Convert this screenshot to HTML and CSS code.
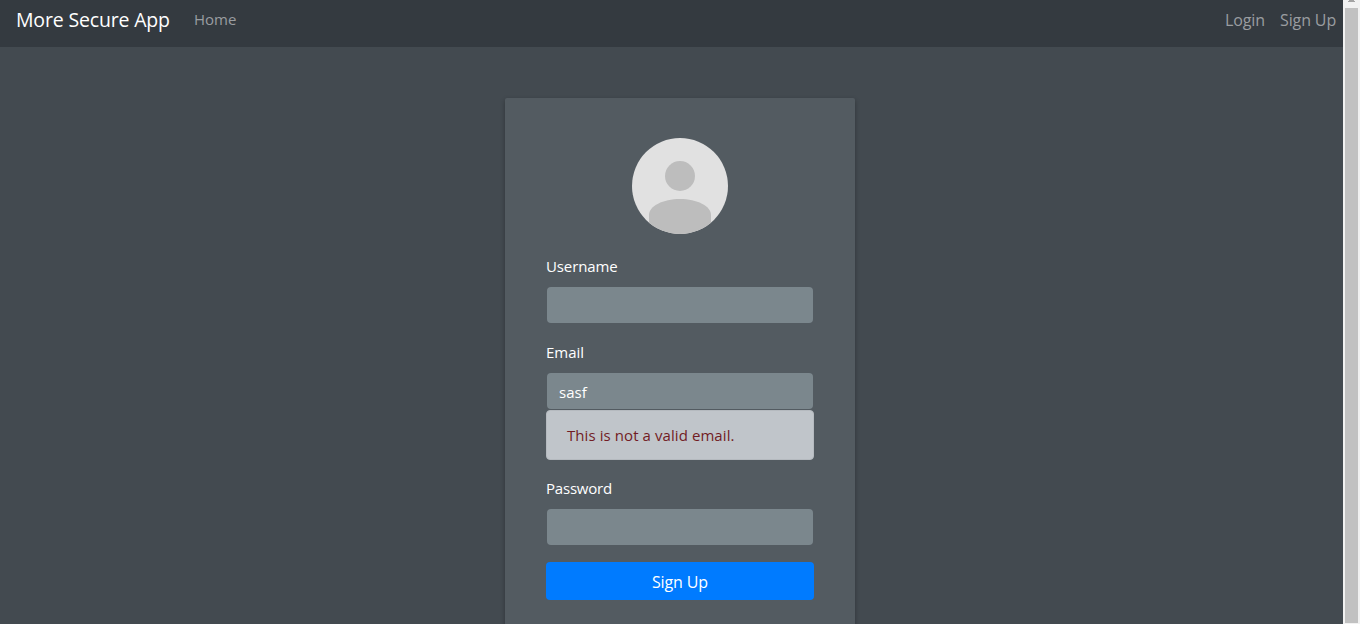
FILE: index.html
```html
<!DOCTYPE html>
<html lang="en">
<head>
<meta charset="utf-8">
<title>More Secure App</title>
<link rel="stylesheet" href="styles.css">
</head>
<body>
<div class="page">
  <nav class="navbar">
    <a class="brand">More Secure App</a>
    <a class="nav-link home">Home</a>
    <a class="nav-link login">Login</a>
    <a class="nav-link signup">Sign Up</a>
  </nav>
  <main class="card">
    <svg class="avatar" viewBox="0 0 96 96">
      <defs><clipPath id="round"><circle cx="48" cy="48" r="48"/></clipPath></defs>
      <g clip-path="url(#round)">
        <rect width="96" height="96" fill="#e1e1e1"/>
        <circle cx="48" cy="38" r="15" fill="#bdbdbd"/>
        <path d="M17 96V77C17 68 31 61 48 61S79 68 79 77V96Z" fill="#bdbdbd"/>
      </g>
    </svg>
    <form class="form">
      <div class="group">
        <label class="label username" for="username">Username</label>
        <input class="control" id="username" type="text">
      </div>
      <div class="group">
        <label class="label" for="email">Email</label>
        <input class="control" id="email" type="text" value="sasf">
        <div class="alert">This is not a valid email.</div>
      </div>
      <div class="group">
        <label class="label password" for="password">Password</label>
        <input class="control" id="password" type="password">
      </div>
      <button class="submit" type="button">Sign Up</button>
    </form>
  </main>
</div>
<div class="scrollbar">
  <svg class="arrow" viewBox="0 0 17 8"><path d="M6 0H11V1H12V2H5V1H6Z" fill="#a3a3a3"/></svg>
  <div class="thumb"></div>
</div>
</body>
</html>
```
FILE: styles.css
```css
* { box-sizing: border-box; }
body {
  margin: 0;
  height: 624px;
  display: flex;
  overflow: hidden;
  background: #434a50;
  font: 15px/24px "Segoe UI", "Open Sans", "Noto Sans", sans-serif;
  color: #fff;
}
.page { flex: 1; height: 624px; overflow: hidden; }
.navbar {
  height: 47px;
  padding: 7px 6px 0 16px;
  display: flex;
  background: #343a40;
  white-space: nowrap;
}
.brand {
  width: 154px;
  margin-right: 24px;
  padding-top: 1px;
  font-size: 19.5px;
  letter-spacing: -0.17px;
}
.nav-link { color: #9a9da0; }
.home { width: 43px; }
.login,
.signup { padding-top: 1px; font-size: 16px; letter-spacing: -0.12px; }
.login { width: 40px; margin: 0 15px 0 auto; }
.signup { width: 57px; }
.card {
  width: 350px;
  height: 600px;
  margin: 51px 0 0 505px;
  padding: 40px 41px;
  border-radius: 2px;
  background: #535b61;
  box-shadow: 0 2px 5px rgba(0, 0, 0, 0.3);
}
.avatar { display: block; width: 96px; height: 96px; margin: 0 auto 20px; }
.group { display: flex; flex-direction: column; margin-bottom: 16px; }
.label { height: 24px; margin-bottom: 9px; }
.username { letter-spacing: -0.12px; }
.password { letter-spacing: -0.2px; }
.control {
  height: 36px;
  margin: 0 1px 1px;
  padding: 2px 12px 0;
  border: 0;
  border-radius: 4px;
  background: #7b878d;
  color: #fff;
  font: inherit;
}
.alert {
  height: 50px;
  padding: 12px 20px;
  border: 1px solid #b5babf;
  border-radius: 4px;
  background: #c0c5ca;
  color: #721c24;
  letter-spacing: 0.08px;
}
.submit {
  display: block;
  width: 268px;
  height: 38px;
  padding: 2px 0 0;
  border: 0;
  border-radius: 4px;
  background: #007bff;
  color: #fff;
  font: inherit;
  font-size: 16px;
  letter-spacing: -0.12px;
}
.scrollbar { width: 17px; height: 624px; background: #f1f1f1; }
.arrow { display: block; width: 17px; height: 8px; }
.thumb { width: 13px; height: 615px; margin-left: 2px; background: #c1c1c1; }
```
